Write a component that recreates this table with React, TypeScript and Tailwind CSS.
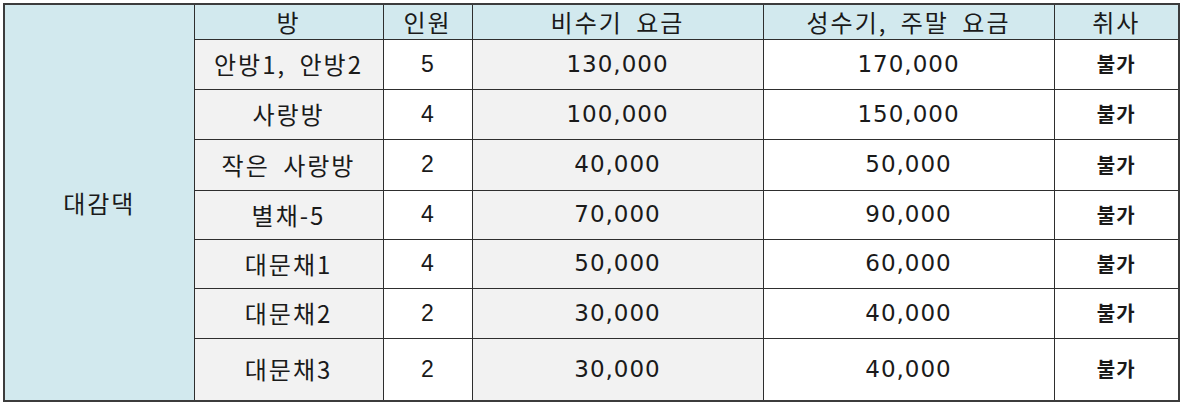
import React from "react";

type Room = {
  name: string;
  people: number;
  offPeak: string;
  peak: string;
  cooking: string;
  h: string;
};

const rooms: Room[] = [
  { name: "안방1, 안방2", people: 5, offPeak: "130,000", peak: "170,000", cooking: "불가", h: "h-[50px]" },
  { name: "사랑방", people: 4, offPeak: "100,000", peak: "150,000", cooking: "불가", h: "h-[50px]" },
  { name: "작은 사랑방", people: 2, offPeak: "40,000", peak: "50,000", cooking: "불가", h: "h-[51px]" },
  { name: "별채-5", people: 4, offPeak: "70,000", peak: "90,000", cooking: "불가", h: "h-[49px]" },
  { name: "대문채1", people: 4, offPeak: "50,000", peak: "60,000", cooking: "불가", h: "h-[49px]" },
  { name: "대문채2", people: 2, offPeak: "30,000", peak: "40,000", cooking: "불가", h: "h-[50px]" },
  { name: "대문채3", people: 2, offPeak: "30,000", peak: "40,000", cooking: "불가", h: "h-[63px]" },
];

const korean = "font-['Noto_Sans_CJK_KR',sans-serif]";
const num = "font-['DejaVu_Sans',sans-serif] tracking-[1px]";
const cell = "border border-[#2e2e2e] text-center align-middle p-0";
const label = "text-[24px] tracking-[2px] [word-spacing:6px]";

export default function App() {
  return (
    <div className="bg-white w-[1182px] h-[406px] pt-[3px] pl-[3px]">
      <table
        className={`table-fixed border-collapse w-[1175px] text-[#1a1a1a] border-2 border-[#3c3c3c] ${korean}`}
      >
        <colgroup>
          <col className="w-[190px]" />
          <col className="w-[189px]" />
          <col className="w-[89px]" />
          <col className="w-[291px]" />
          <col className="w-[291px]" />
          <col className="w-[125px]" />
        </colgroup>
        <tbody>
          <tr className={`h-[35px] bg-[#d2e9ee] leading-none ${label}`}>
            <td rowSpan={8} className={`${cell} bg-[#d2e9ee]`}>
              대감댁
            </td>
            <td className={cell}>방</td>
            <td className={cell}>인원</td>
            <td className={cell}>비수기 요금</td>
            <td className={cell}>성수기, 주말 요금</td>
            <td className={cell}>취사</td>
          </tr>
          {rooms.map((r) => (
            <tr key={r.name} className={`${r.h} leading-none`}>
              <td className={`${cell} bg-[#f2f2f2] ${label}`}>{r.name}</td>
              <td className={`${cell} bg-white text-[23px] font-['Liberation_Sans',sans-serif]`}>
                {r.people}
              </td>
              <td className={`${cell} bg-[#f2f2f2] text-[23px] ${num}`}>
                {r.offPeak}
              </td>
              <td className={`${cell} bg-white text-[23px] ${num}`}>{r.peak}</td>
              <td className={`${cell} bg-white text-[20px] font-bold tracking-[1px]`}>
                {r.cooking}
              </td>
            </tr>
          ))}
        </tbody>
      </table>
    </div>
  );
}
